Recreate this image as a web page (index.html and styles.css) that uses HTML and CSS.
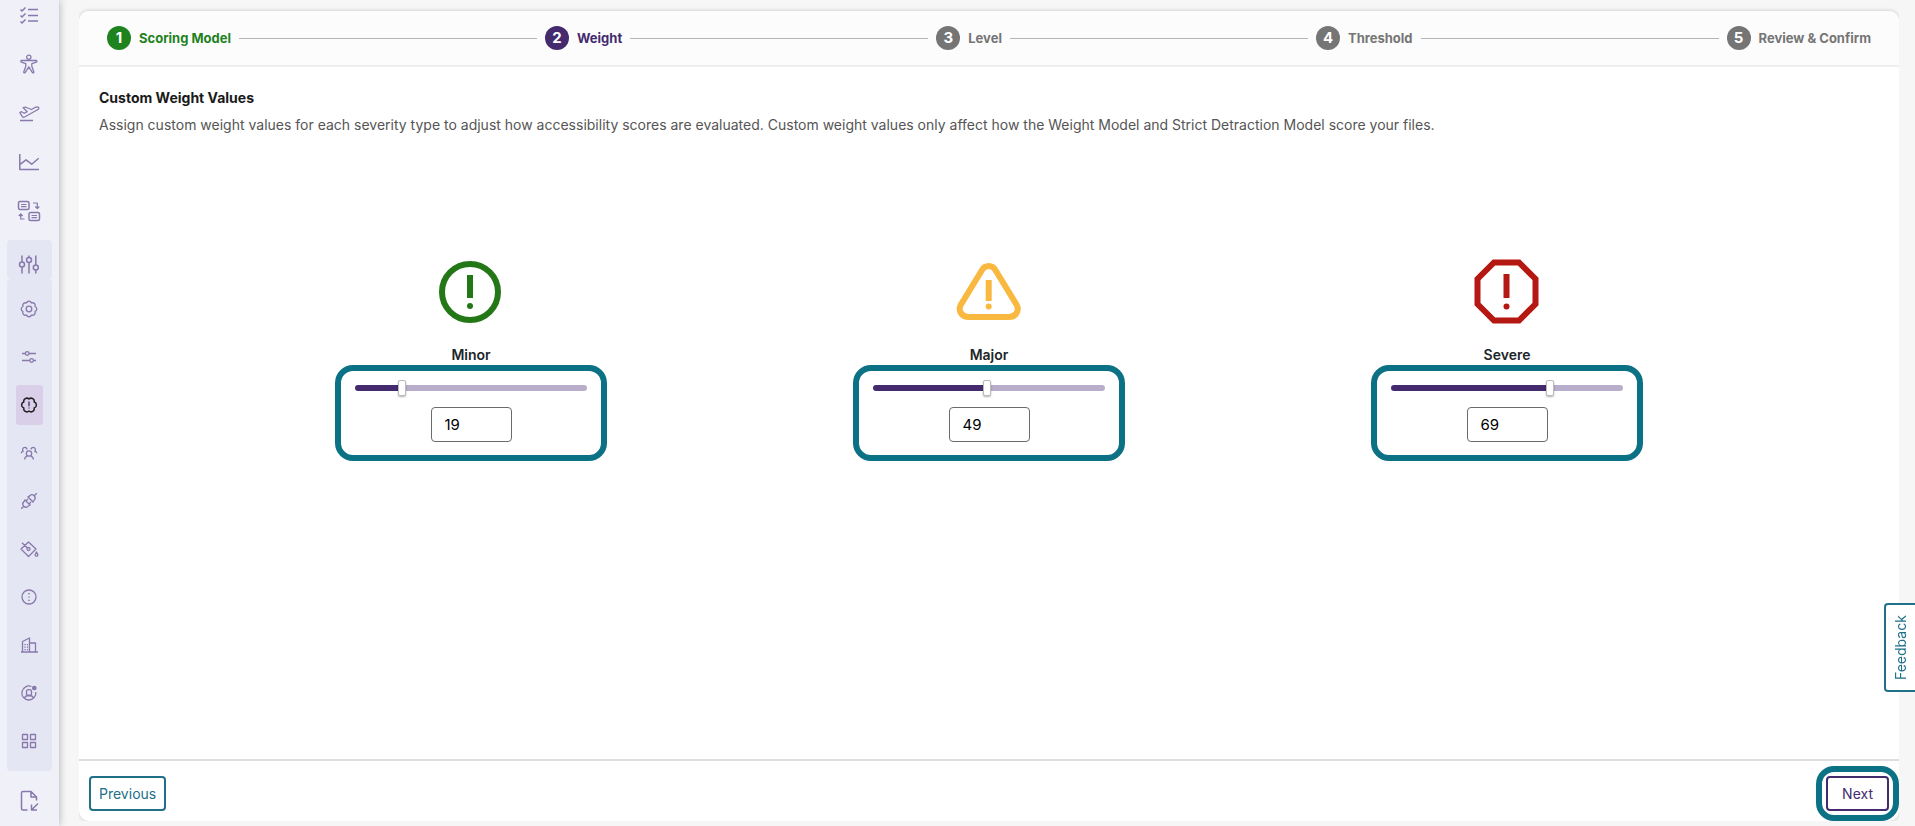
FILE: index.html
```html
<!DOCTYPE html>
<html lang="en">
<head>
    <meta charset="UTF-8">
    <meta name="viewport" content="width=device-width, initial-scale=1.0">
    <title>Custom Weight Values</title>
    <link rel="stylesheet" href="styles.css">
</head>
<body>
    <nav class="sidebar" aria-label="Main">
        <div class="nav-list">
            <a class="nav-item" href="#" aria-label="Checklist">
                <svg class="icon" viewBox="0 0 25 24"><path d="M3.500 6.500l1.500 1.500 3.500-3.500M3.500 12.500l1.500 1.500 3.500-3.500M3.500 18.500l1.500 1.500 3.500-3.500M11 6.500h10M11 12.500h10M11 18h10"/></svg>
            </a>
            <a class="nav-item" href="#" aria-label="Accessibility">
                <svg class="icon thin" viewBox="0 0 25 24"><circle cx="11.800" cy="5.300" r="2.100"/><path d="M4.500 8.500h14.600c1 0 1 1.300.2 1.600l-4.500 1.600v2.500l2 5.600c.3 1.200-1 1.500-1.500.6l-3.500-5.500-3.500 5.500c-.6.9-1.800.5-1.500-.6l2-5.600v-2.500l-4.500-1.600c-.8-.4-.6-1.600.2-1.600z"/></svg>
            </a>
            <a class="nav-item" href="#" aria-label="Launch">
                <svg class="icon thin" viewBox="0 0 25 24"><path d="M3 19.500h13M2.800 11.500l1.700-.8 2.700 1.600 3-1.600-4-4 2-.7 6.200 2.500 4-2.200c1.400-.7 2.800-.4 3.400.5.300.7-.2 1.500-1.300 2L7.600 16c-1 .5-1.700.4-2.300-.4z"/></svg>
            </a>
            <a class="nav-item" href="#" aria-label="Reports">
                <svg class="icon" viewBox="0 0 25 24"><path d="M2.800 4v15.500H22M3.500 14.200l5.500-4.400 5.700 4.400 7-6"/></svg>
            </a>
            <a class="nav-item" href="#" aria-label="Convert">
                <svg class="icon" viewBox="0 0 25 24"><rect x="1.500" y="2.500" width="10.500" height="8" rx="1.500"/><rect x="12" y="13.500" width="10.500" height="8" rx="1.500"/><path d="M4 5.500h5.500M4 7.700h5.500M14.500 16.500H20M14.500 18.700H20M16 4h4.300v5M18.300 7.500l2 2 2-2M7.500 20H3.700v-5M1.700 17l2-2 2 2" stroke-width="1.200"/></svg>
            </a>
            <div class="nav-group">
                <a class="nav-parent" href="#" aria-label="Settings">
                    <svg class="icon" viewBox="0 0 25 24"><path d="M5 3.500v6.300M5 15v6.500M12 3.500v2M12 10.700v10.800M18.800 3.500v9.300M18.800 18v3.500"/><circle cx="5" cy="12.400" r="2.500"/><circle cx="12" cy="8.100" r="2.500"/><circle cx="18.800" cy="15.400" r="2.500"/></svg>
                </a>
                <div class="nav-sub">
                    <a class="nav-item" href="#" aria-label="General">
                        <svg class="icon thin" viewBox="0 0 25 24"><path d="M18 9.500a2.650 2.650 0 0 1 0 5a2.650 2.650 0 0 1-3.500 3.500a2.650 2.650 0 0 1-5 0a2.650 2.650 0 0 1-3.500-3.500a2.650 2.650 0 0 1 0-5a2.650 2.650 0 0 1 3.500-3.500a2.650 2.650 0 0 1 5 0a2.650 2.650 0 0 1 3.500 3.500z"/><circle cx="12" cy="12" r="2.800"/></svg>
                    </a>
                    <a class="nav-item" href="#" aria-label="Preferences">
                        <svg class="icon thin" viewBox="0 0 25 24"><path d="M5 8.500h3.300M12 8.500h7M5 15.500h7.800M16.500 15.500H19"/><circle cx="10.200" cy="8.500" r="1.800"/><circle cx="14.600" cy="15.500" r="1.800"/></svg>
                    </a>
                    <a class="nav-item active" href="#" aria-label="Scoring" aria-current="page">
                        <svg class="icon" viewBox="0 0 25 24"><path d="M17.200 9a3.150 3.150 0 0 1 0 6a3.150 3.150 0 0 1-5.200 3a3.150 3.150 0 0 1-5.200-3a3.150 3.150 0 0 1 0-6a3.150 3.150 0 0 1 5.200-3a3.150 3.150 0 0 1 5.200 3z"/><path class="mark" d="M12 8.500v4.700M12 14.500v1"/></svg>
                    </a>
                    <a class="nav-item" href="#" aria-label="Teams">
                        <svg class="icon thin" viewBox="0 0 25 24"><circle cx="12" cy="12.500" r="2.700"/><path d="M7.500 18.500c.2-1.900 1-2.700 2.400-3.400M16.500 18.500c-.2-1.900-1-2.700-2.400-3.400M4.200 12.300c.1-1.100.9-1.800 2-2-1.400-1.700-.2-4 1.500-4 1.300 0 2.300.9 2.300 2.300M19.800 12.300c-.1-1.100-.9-1.800-2-2 1.400-1.700.2-4-1.500-4-1.300 0-2.300.9-2.300 2.300"/></svg>
                    </a>
                    <a class="nav-item" href="#" aria-label="Integrations">
                        <svg class="icon thin" viewBox="0 0 25 24"><path d="M4.200 19.800l2.600-2.600M17.300 6.700l2.600-2.600M7.500 10.500l6 6M10.500 7.500l6 6M8.200 11.200L6.500 13c-1 1.200-1 2.900.2 4.200 1.300 1.200 3 1.200 4.200.2l1.800-1.700M11.200 8.200L13 6.500c1.200-1 2.900-1 4.200.2 1.200 1.300 1.200 3 .2 4.200l-1.700 1.800M9 12l2-2M12 15l2-2"/></svg>
                    </a>
                    <a class="nav-item" href="#" aria-label="Branding">
                        <svg class="icon thin" viewBox="0 0 25 24"><path d="M11.500 5L19 12l-7.500 7.500L4 12zM5 5.800l5.500 5.200"/><circle cx="11.500" cy="12" r="1.500"/><path d="M19.500 15c-2 3-1.500 4.200 0 4.200s2-1.200 0-4.200z"/></svg>
                    </a>
                    <a class="nav-item" href="#" aria-label="Information">
                        <svg class="icon thin" viewBox="0 0 25 24"><circle cx="12" cy="12" r="7"/><path d="M12 8v1.200M12 11.400v1.200M12 14.800V16" stroke-width="1.600"/></svg>
                    </a>
                    <a class="nav-item" href="#" aria-label="Organization">
                        <svg class="icon thin" viewBox="0 0 25 24"><path d="M4 19h17M5.500 19V8.500L12.500 5v14M12.500 10h6v9M8 11v1.200M10.500 11v1.200M8 13.500v1.200M10.500 13.500v1.200M8 16v1.200M10.500 16v1.200"/></svg>
                    </a>
                    <a class="nav-item" href="#" aria-label="Profile">
                        <svg class="icon thin" viewBox="0 0 25 24"><path d="M14.500 5.500A7 7 0 1 0 18.800 11M7.500 17c.6-2 2.400-2.500 4.500-2.500s3.900.5 4.500 2.500"/><rect x="9.500" y="8.700" width="5" height="5.800" rx="2"/><circle class="solid" cx="17.300" cy="7" r="1.700"/></svg>
                    </a>
                    <a class="nav-item" href="#" aria-label="Apps">
                        <svg class="icon thin" viewBox="0 0 25 24"><path d="M5.500 5.500h5v5h-5zM13.500 5.500h5v5h-5zM5.500 13.500h5v5h-5zM13.500 13.500h5v5h-5z"/></svg>
                    </a>
                </div>
            </div>
            <a class="nav-item" href="#" aria-label="Import file">
                <svg class="icon" viewBox="0 0 25 24"><path d="M10.500 22H6c-1 0-1.500-.5-1.500-1.500V5c0-1 .5-1.500 1.500-1.500h8l5.500 5.500v3.500M14 3.500V9h5.500M21 15.500L14.500 22M14.500 16.500V22H20"/></svg>
            </a>
        </div>
    </nav>

    <main class="main">
        <div class="card">
            <ol class="stepper">
                <li class="step done"><span class="step-number">1</span>Scoring Model</li>
                <li class="step current" aria-current="step"><span class="step-number">2</span>Weight</li>
                <li class="step"><span class="step-number">3</span>Level</li>
                <li class="step"><span class="step-number">4</span>Threshold</li>
                <li class="step"><span class="step-number">5</span>Review &amp; Confirm</li>
            </ol>

            <div class="content">
                <h1>Custom Weight Values</h1>
                <p>Assign custom weight values for each severity type to adjust how accessibility scores are evaluated. Custom weight values only affect how the Weight Model and Strict Detraction Model score your files.</p>

                <div class="weights">
                    <section class="weight">
                        <svg class="severity minor" viewBox="0 0 66 66"><circle cx="32" cy="33" r="28"/><path d="M32 16v23"/><circle class="dot" cx="32" cy="47" r="3"/></svg>
                        <label for="minorValue">Minor</label>
                        <div class="controls highlight">
                            <input type="range" min="0" max="100" value="19" style="--value: 19%" aria-label="Minor weight">
                            <input type="number" id="minorValue" min="0" max="100" value="19">
                        </div>
                    </section>
                    <section class="weight">
                        <svg class="severity major" viewBox="0 0 66 66"><path d="M25.700 11.500c3-6 11-6 14 0l21 34.500c3 6-1 12-8 12h-40c-7 0-11-6-8-12z"/><path d="M32.700 21v21"/><circle class="dot" cx="32.700" cy="47.500" r="3"/></svg>
                        <label for="majorValue">Major</label>
                        <div class="controls highlight">
                            <input type="range" min="0" max="100" value="49" style="--value: 49%" aria-label="Major weight">
                            <input type="number" id="majorValue" min="0" max="100" value="49">
                        </div>
                    </section>
                    <section class="weight">
                        <svg class="severity severe" viewBox="0 0 66 66"><path d="M20 3.500h25l16.500 16.500v25L45 61.500H20L3.500 45V20z"/><path d="M32.500 15v24"/><circle class="dot" cx="32.500" cy="47.500" r="3"/></svg>
                        <label for="severeValue">Severe</label>
                        <div class="controls highlight">
                            <input type="range" min="0" max="100" value="69" style="--value: 69%" aria-label="Severe weight">
                            <input type="number" id="severeValue" min="0" max="100" value="69">
                        </div>
                    </section>
                </div>
            </div>

            <footer class="actions">
                <button type="button" class="btn">Previous</button>
                <div class="highlight">
                    <button type="button" class="btn btn-next">Next</button>
                </div>
            </footer>
        </div>
    </main>

    <button type="button" class="feedback">Feedback</button>

    <script>
        // Keep each slider and its number box in step
        document.querySelectorAll('.controls').forEach((controls) => {
            const range = controls.querySelector('input[type="range"]');
            const number = controls.querySelector('input[type="number"]');

            function update(value) {
                range.value = value;
                range.style.setProperty('--value', `${range.value}%`);
            }

            range.addEventListener('input', () => {
                number.value = range.value;
                update(range.value);
            });
            number.addEventListener('input', () => update(number.value));
        });
    </script>
</body>
</html>
```
FILE: styles.css
```css
* {
    box-sizing: border-box;
}

body {
    font-family: Inter, "Liberation Sans", sans-serif;
    font-size: 14px;
    background-color: #f6f6f6;
    color: #212529;
    margin: 0;
    display: flex;
    height: 100vh;
    overflow: hidden;
}

/* Sidebar */
.sidebar {
    width: 59px;
    flex-shrink: 0;
    background-color: #f0f1f8;
    box-shadow: 0 0 8px rgba(0, 0, 0, 0.3);
    overflow: hidden;
}

.nav-list {
    display: flex;
    flex-direction: column;
    align-items: center;
    gap: 9px;
    margin-top: -5px;
}

.nav-item {
    width: 27px;
    height: 40px;
    flex-shrink: 0;
    display: flex;
    justify-content: center;
    align-items: center;
    border-radius: 3px;
    color: #8878ab;
}

.nav-item.active {
    background-color: #d9cfe8;
    color: #212121;
}

.nav-group {
    width: 45px;
}

.nav-parent {
    height: 39px;
    padding-top: 8px;
    display: flex;
    justify-content: center;
    align-items: center;
    background-color: #e4e6f3;
    border-radius: 4px;
    color: #8878ab;
}

.nav-sub {
    display: flex;
    flex-direction: column;
    align-items: center;
    gap: 8px;
    padding: 10px 0;
    background-color: #e4e6f3;
    border-radius: 4px;
}

.icon {
    width: 25px;
    height: 24px;
    flex-shrink: 0;
    fill: none;
    stroke: currentColor;
    stroke-width: 1.5;
    stroke-linejoin: round;
}

.icon.thin {
    stroke-width: 1.3;
}

.icon .solid {
    fill: currentColor;
}

.icon .mark {
    stroke: #75648f;
    stroke-width: 2;
}

/* Card */
.main {
    flex: 1;
    min-width: 0;
    display: flex;
    padding: 11px 16px 5px 20px;
}

.card {
    flex: 1;
    display: flex;
    flex-direction: column;
    background-color: #fff;
    border-radius: 10px;
    box-shadow: 0 0 4px rgba(0, 0, 0, 0.2);
    clip-path: inset(-8px 0 0 0);
}

.stepper {
    display: flex;
    align-items: center;
    list-style: none;
    margin: 0;
    padding: 15px 28px;
    background-color: #fcfcfc;
    border-bottom: 2px solid #eee;
    border-radius: 10px 10px 0 0;
}

.step {
    display: flex;
    align-items: center;
    gap: 8px;
    font-size: 13px;
    line-height: 24px;
    font-weight: 700;
    color: #757575;
    white-space: nowrap;
}

.step:not(:last-child) {
    flex: 1 0 auto;
    margin-right: 8px;
}

.step:not(:last-child)::after {
    content: "";
    flex: 1;
    height: 1px;
    background-color: #b5b5b5;
}

.step-number {
    width: 24px;
    height: 24px;
    border-radius: 50%;
    background-color: #757575;
    color: #fff;
    font-size: 15px;
    text-align: center;
}

.step.done {
    color: #1e821e;
}

.step.done .step-number {
    background-color: #1e821e;
}

.step.current {
    color: #432b6e;
}

.step.current .step-number {
    background-color: #432b6e;
}

.content {
    flex: 1;
    padding: 21px 20px;
}

h1 {
    font-size: 14px;
    line-height: 20px;
    font-weight: 700;
    margin: 0 0 7px;
    color: #1a1a1a;
}

p {
    line-height: 20px;
    margin: 0;
    color: #555;
}

.weights {
    display: flex;
    justify-content: space-evenly;
    margin: 124px -20px 0;
}

.weight {
    width: 252px;
    display: flex;
    flex-direction: column;
    align-items: center;
}

.weight label {
    font-weight: 600;
    line-height: 20px;
    margin: 20px 0 10px;
}

.severity {
    width: 66px;
    height: 66px;
    fill: none;
    stroke: currentColor;
    stroke-width: 6;
}

.severity .dot {
    fill: currentColor;
    stroke: none;
}

.minor {
    color: #247716;
}

.major {
    color: #f9b840;
}

.severe {
    color: #b51712;
}

.controls {
    width: 100%;
    display: flex;
    flex-direction: column;
    align-items: center;
    gap: 12px;
    padding: 5px 10px 9px;
}

.highlight {
    border-radius: 8px;
    outline: 6px solid #0b7285;
    outline-offset: 4px;
}

input[type="range"] {
    appearance: none;
    width: 100%;
    height: 15px;
    margin: 0;
    background: transparent;
}

input[type="range"]::-webkit-slider-runnable-track {
    height: 6px;
    border-radius: 3px;
    background: linear-gradient(to right, #432b6e var(--value), #b8aecb var(--value));
}

input[type="range"]::-webkit-slider-thumb {
    appearance: none;
    width: 8px;
    height: 16px;
    margin-top: -5px;
    background-color: #fff;
    border: 1px solid #bbb;
    border-radius: 2px;
    box-shadow: 0 1px 2px rgba(0, 0, 0, 0.3);
}

input[type="number"] {
    appearance: textfield;
    width: 81px;
    height: 35px;
    padding: 0 13px;
    font: inherit;
    font-size: 15px;
    color: #000;
    background-color: #fff;
    border: 1px solid #6b6b6b;
    border-radius: 4px;
}

/* Footer */
.actions {
    display: flex;
    justify-content: space-between;
    padding: 15px 10px 10px;
    border-top: 2px solid #dedede;
}

.btn {
    display: block;
    height: 35px;
    padding: 0 8px;
    font: inherit;
    color: #20708a;
    background-color: #fff;
    border: 2px solid #20708a;
    border-radius: 4px;
    cursor: pointer;
}

.btn-next {
    padding: 0 14px;
    color: #432b6e;
    border-color: #432b6e;
}

.feedback {
    position: fixed;
    right: 0;
    top: 603px;
    width: 31px;
    height: 89px;
    padding: 0;
    writing-mode: vertical-rl;
    transform: rotate(180deg);
    font: inherit;
    color: #20708a;
    background-color: #fff;
    border: 2px solid #20708a;
    border-left: 0;
    border-radius: 0 4px 4px 0;
    cursor: pointer;
}
```
